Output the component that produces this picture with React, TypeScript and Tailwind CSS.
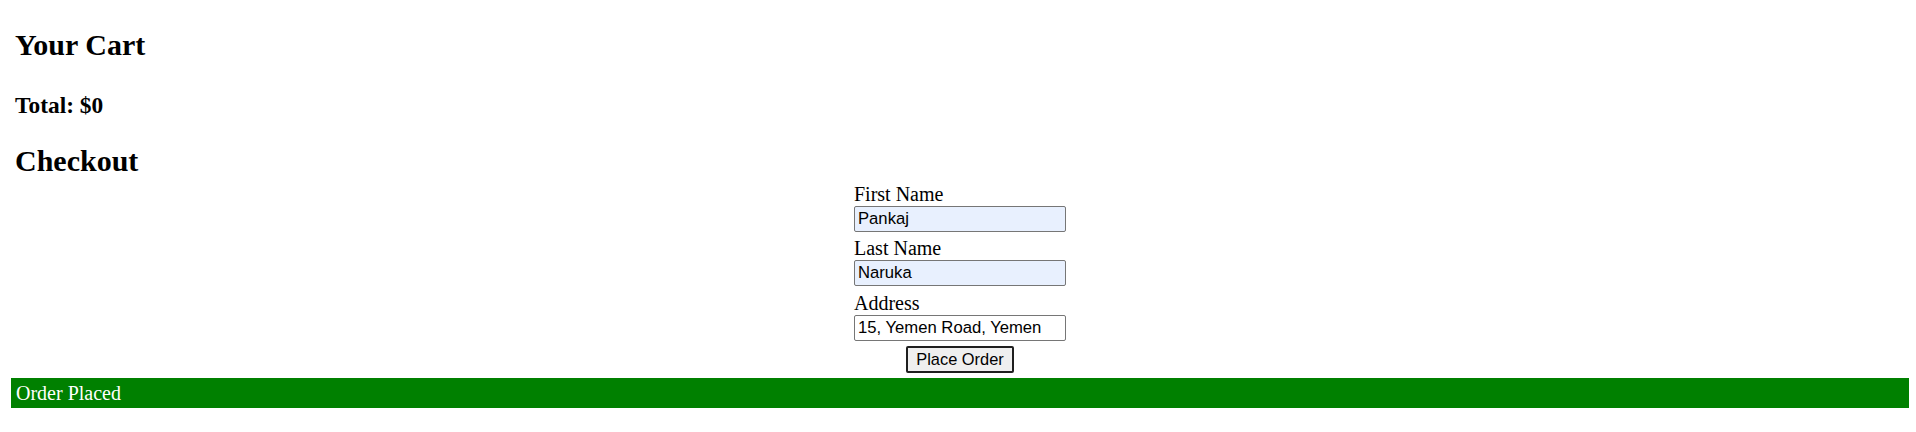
import * as React from "react";

const serif = "font-['Liberation_Serif','Times_New_Roman',serif]";

/** Label stacked over its input, as in the plain checkout form. */
function Field({ label, value, filled, gap }: { label: string; value: string; filled?: boolean; gap: string }) {
  return (
    <label className={`flex flex-col ${gap}`}>
      <span className="text-[20px] leading-[23px] text-black">{label}</span>
      <input
        defaultValue={value}
        className={
          "h-[26px] w-[212px] rounded-[2px] border border-[#767676] px-[3px] text-[16.67px] text-black outline-none font-['Liberation_Sans',Arial,sans-serif] " +
          (filled ? "bg-[#e8f0fe]" : "bg-white")
        }
      />
    </label>
  );
}

export default function App() {
  return (
    <div className={`h-[432px] bg-white pl-[11px] pr-[7px] pt-[28px] text-black ${serif}`}>
      <h2 className="pl-[4px] text-[30px] font-bold leading-[34px]">Your Cart</h2>
      <h3 className="mt-[30px] pl-[4px] text-[23.4px] font-bold leading-[26px]">Total: $0</h3>
      <h2 className="mt-[26px] pl-[4px] text-[30px] font-bold leading-[34px]">Checkout</h2>

      <form className="mt-[5px] flex flex-col items-center" onSubmit={(e) => e.preventDefault()}>
        <div className="flex w-[212px] flex-col">
          <Field label="First Name" value="Pankaj" filled gap="mb-[5px]" />
          <Field label="Last Name" value="Naruka" filled gap="mb-[6px]" />
          <Field label="Address" value="15, Yemen Road, Yemen" gap="mb-0" />
        </div>
        <button
          type="submit"
          className="mt-[5px] h-[27px] w-[108px] rounded-[2px] border-2 border-[#1f1f1f] bg-[#efefef] text-[16.4px] leading-none text-black font-['Liberation_Sans',Arial,sans-serif]"
        >
          Place Order
        </button>
      </form>

      <div className="mt-[5px] h-[30px] bg-[#008000] pl-[5px] text-[20px] leading-[30px] text-white">Order Placed</div>
    </div>
  );
}
